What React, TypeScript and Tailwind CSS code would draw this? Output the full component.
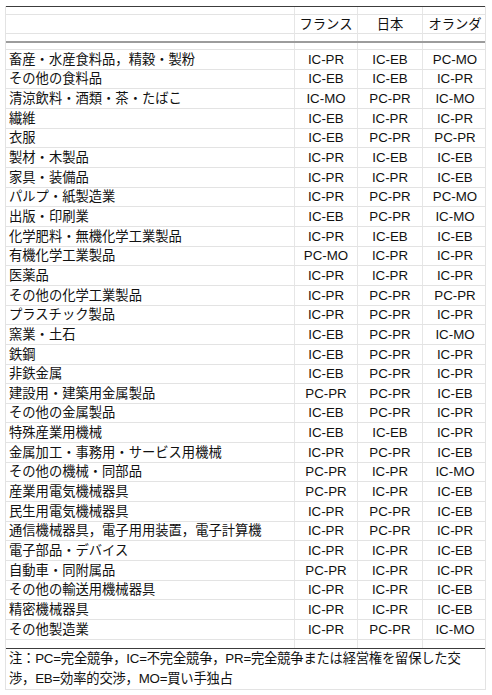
const rows: [string, string, string, string][] = [
  ["畜産・水産食料品，精穀・製粉", "IC-PR", "IC-EB", "PC-MO"],
  ["その他の食料品", "IC-EB", "IC-EB", "IC-PR"],
  ["清涼飲料・酒類・茶・たばこ", "IC-MO", "PC-PR", "IC-MO"],
  ["繊維", "IC-EB", "IC-PR", "IC-PR"],
  ["衣服", "IC-EB", "PC-PR", "PC-PR"],
  ["製材・木製品", "IC-PR", "IC-EB", "IC-EB"],
  ["家具・装備品", "IC-PR", "IC-PR", "IC-EB"],
  ["パルプ・紙製造業", "IC-PR", "PC-PR", "PC-MO"],
  ["出版・印刷業", "IC-EB", "PC-PR", "IC-MO"],
  ["化学肥料・無機化学工業製品", "IC-PR", "IC-EB", "IC-EB"],
  ["有機化学工業製品", "PC-MO", "IC-PR", "IC-PR"],
  ["医薬品", "IC-PR", "IC-PR", "IC-PR"],
  ["その他の化学工業製品", "IC-PR", "PC-PR", "PC-PR"],
  ["プラスチック製品", "IC-PR", "PC-PR", "IC-PR"],
  ["窯業・土石", "IC-EB", "PC-PR", "IC-MO"],
  ["鉄鋼", "IC-EB", "PC-PR", "IC-PR"],
  ["非鉄金属", "IC-EB", "PC-PR", "IC-PR"],
  ["建設用・建築用金属製品", "PC-PR", "PC-PR", "IC-EB"],
  ["その他の金属製品", "IC-EB", "PC-PR", "IC-PR"],
  ["特殊産業用機械", "IC-EB", "IC-EB", "IC-PR"],
  ["金属加工・事務用・サービス用機械", "IC-PR", "PC-PR", "IC-EB"],
  ["その他の機械・同部品", "PC-PR", "IC-PR", "IC-MO"],
  ["産業用電気機械器具", "PC-PR", "IC-PR", "IC-EB"],
  ["民生用電気機械器具", "IC-PR", "PC-PR", "IC-EB"],
  ["通信機械器具，電子用用装置，電子計算機", "IC-PR", "PC-PR", "IC-PR"],
  ["電子部品・デバイス", "IC-PR", "IC-PR", "IC-EB"],
  ["自動車・同附属品", "PC-PR", "IC-PR", "IC-PR"],
  ["その他の輸送用機械器具", "IC-PR", "IC-PR", "IC-EB"],
  ["精密機械器具", "IC-PR", "IC-PR", "IC-EB"],
  ["その他製造業", "IC-PR", "PC-PR", "IC-MO"],
]

const grid = "grid grid-cols-[289px_63px_65px_64px]"
const cell = "border-r border-[#e6e6e6] last:border-r-0"

function Spacer({ h, line = true }: { h: string; line?: boolean }) {
  return (
    <div className={`${grid} ${h} ${line ? "border-b border-[#e3e3e3]" : ""}`}>
      <div className={cell} />
      <div className={cell} />
      <div className={cell} />
      <div className={cell} />
    </div>
  )
}

export default function App() {
  return (
    <div className="bg-white pt-[6px] pl-[5px] text-[13.3px] text-[#111] font-['Liberation_Sans','Noto_Sans_CJK_JP',sans-serif]">
      <div className="w-[481px] border-x border-b border-[#e3e3e3]">
        <div className="h-px w-[479px] bg-[#3c3c3c]" />
        <Spacer h="h-[8px]" />
        <div className={`${grid} h-[19px] border-b border-[#e3e3e3]`}>
          <div className={cell} />
          <div className={`${cell} flex items-center justify-center`}>フランス</div>
          <div className={`${cell} flex items-center justify-center`}>日本</div>
          <div className={`${cell} flex items-center justify-center`}>オランダ</div>
        </div>
        <Spacer h="h-[7px]" line={false} />
        <div className="h-[2px] bg-[#9c9c9c]" />
        <Spacer h="h-[7px]" />
        {rows.map((r) => (
          <div key={r[0]} className={`${grid} h-[19.67px] border-b border-[#e3e3e3] leading-none`}>
            <div className={`${cell} flex items-center pl-[3px] whitespace-nowrap`}>{r[0]}</div>
            <div className={`${cell} flex items-center justify-center`}>{r[1]}</div>
            <div className={`${cell} flex items-center justify-center`}>{r[2]}</div>
            <div className={`${cell} flex items-center justify-center`}>{r[3]}</div>
          </div>
        ))}
        <Spacer h="h-[8px]" line={false} />
        <div className="h-px bg-[#3c3c3c]" />
        <div className="pl-[3px] leading-[20px] whitespace-nowrap tracking-[-0.2px]">
          <div>注：PC=完全競争，IC=不完全競争，PR=完全競争または経営権を留保した交</div>
          <div>渉，EB=効率的交渉，MO=買い手独占</div>
        </div>
      </div>
    </div>
  )
}
